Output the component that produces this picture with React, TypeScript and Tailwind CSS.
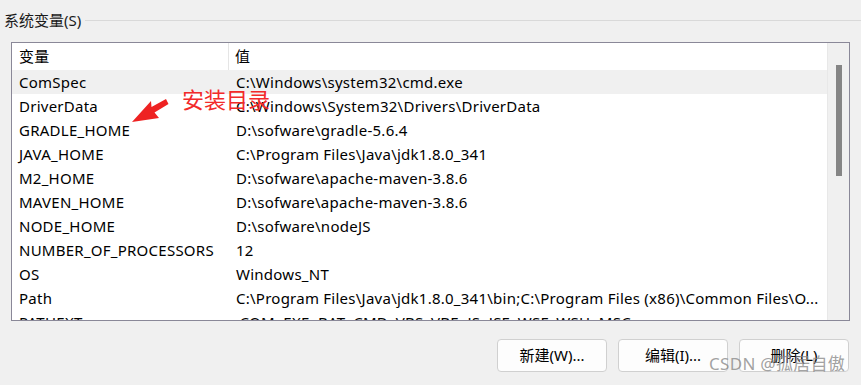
const rows = [
    ['ComSpec', 'C:\\Windows\\system32\\cmd.exe'],
    ['DriverData', 'C:\\Windows\\System32\\Drivers\\DriverData'],
    ['GRADLE_HOME', 'D:\\sofware\\gradle-5.6.4'],
    ['JAVA_HOME', 'C:\\Program Files\\Java\\jdk1.8.0_341'],
    ['M2_HOME', 'D:\\sofware\\apache-maven-3.8.6'],
    ['MAVEN_HOME', 'D:\\sofware\\apache-maven-3.8.6'],
    ['NODE_HOME', 'D:\\sofware\\nodeJS'],
    ['NUMBER_OF_PROCESSORS', '12'],
    ['OS', 'Windows_NT'],
    [
        'Path',
        'C:\\Program Files\\Java\\jdk1.8.0_341\\bin;C:\\Program Files (x86)\\Common Files\\O...',
    ],
    ['PATHEXT', '.COM;.EXE;.BAT;.CMD;.VBS;.VBE;.JS;.JSE;.WSF;.WSH;.MSC'],
]

const FONT = "font-['Noto_Sans','Noto_Sans_CJK_SC',sans-serif]"

function WinButton({ label }: { label: string }) {
    return (
        <button className="w-[110px] h-[33px] rounded-[4px] border border-[#d0d0d0] bg-[#fdfdfd] text-[15px] text-black">
            {label}
        </button>
    )
}

export default function App() {
    return (
        <div
            className={`${FONT} relative w-[861px] h-[385px] bg-[#f0f0f0] overflow-hidden text-[15px] tracking-[0.25px] leading-none text-black`}
        >
            {/* group title */}
            <div className="flex items-center h-[40px] pl-[4px]">
                <span className="text-[15px] text-[#1a1a1a] tracking-normal">系统变量(S)</span>
                <div className="flex-1 h-px bg-[#d9d9d9] ml-[4px]" />
            </div>

            {/* list box */}
            <div className="mx-[11px] mt-[2px] h-[279px] border border-[#8a8898] bg-white flex overflow-hidden">
                <div className="flex-1 flex flex-col">
                    <div className="flex h-[27px] items-center shrink-0">
                        <div className="w-[217px] pl-[7px] h-full flex items-center border-r border-[#e5e5e5]">
                            变量
                        </div>
                        <div className="pl-[6px]">值</div>
                    </div>
                    {rows.map((r, i) => (
                        <div
                            key={i}
                            className={`flex h-[24px] shrink-0 items-center whitespace-nowrap ${
                                i === 0 ? 'bg-[#f0f0f0]' : ''
                            }`}
                        >
                            <div className="w-[217px] pl-[7px]">{r[0]}</div>
                            <div className="pl-[7px]">{r[1]}</div>
                        </div>
                    ))}
                </div>
                <div className="w-[22px] shrink-0 bg-[#f0f0f0] flex justify-center pt-[22px] border-l border-[#e8e8e8]">
                    <div className="w-[6px] h-[111px] bg-[#858585]" />
                </div>
            </div>

            {/* buttons */}
            <div className="flex justify-end gap-[11px] mt-[18px] pr-[12px] tracking-normal">
                <WinButton label="新建(W)..." />
                <WinButton label="编辑(I)..." />
                <WinButton label="删除(L)" />
            </div>

            {/* red annotation */}
            <div className="absolute left-[182px] top-[88px] text-[22px] tracking-normal text-[#f22a2a]">
                安装目录
            </div>
            <svg
                className="absolute left-0 top-0"
                width="861"
                height="385"
                viewBox="0 0 861 385"
            >
                <path
                    d="M132 122 L151 101 L151.5 107 L166 99 L168.5 104 L154.5 112.5 L159 118 Z"
                    fill="#ee2222"
                />
            </svg>

            {/* watermark */}
            <div className="absolute left-[709px] top-[355px] text-[17px] text-[#8a8a8a]/80 tracking-[0.3px]">
                CSDN @孤居自傲
            </div>
        </div>
    )
}
